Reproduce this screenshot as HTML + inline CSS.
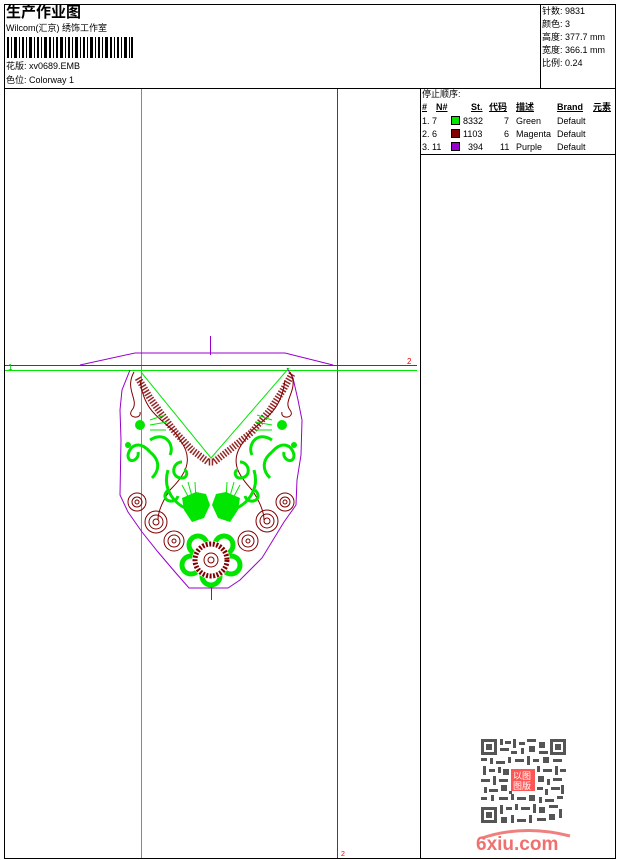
<!DOCTYPE html>
<html><head><meta charset="utf-8"><style>
*{margin:0;padding:0;box-sizing:border-box}
body{width:620px;height:860px;background:#fff;position:relative;overflow:hidden;font-family:"Liberation Sans","Noto Sans CJK SC",sans-serif;color:#000}
.t{position:absolute;font-size:9px;white-space:nowrap;line-height:11px}
.ln{position:absolute;background:#000}
</style></head><body>
<div class="ln" style="left:4px;top:4px;width:612px;height:1px"></div>
<div class="ln" style="left:4px;top:4px;width:1px;height:855px"></div>
<div class="ln" style="left:615px;top:4px;width:1px;height:855px"></div>
<div class="ln" style="left:4px;top:858px;width:612px;height:1px"></div>
<div class="ln" style="left:4px;top:88px;width:612px;height:1px"></div>
<div class="ln" style="left:540px;top:4px;width:1px;height:84px"></div>
<div class="ln" style="left:420px;top:88px;width:1px;height:771px"></div>
<div class="ln" style="left:420px;top:154px;width:196px;height:1px"></div>

<div class="t" style="left:6px;top:4px;font-size:15px;line-height:17px;font-weight:bold">生产作业图</div>
<div class="t" style="left:6px;top:23px">Wilcom(汇京) 绣饰工作室</div>
<svg style="position:absolute;left:7px;top:37px" width="126" height="21">
<g fill="#000">
<rect x="0" y="0" width="2" height="21"/><rect x="4" y="0" width="1" height="21"/><rect x="7" y="0" width="3" height="21"/><rect x="12" y="0" width="1" height="21"/><rect x="15" y="0" width="2" height="21"/><rect x="19" y="0" width="1" height="21"/><rect x="22" y="0" width="3" height="21"/><rect x="27" y="0" width="1" height="21"/><rect x="30" y="0" width="2" height="21"/><rect x="34" y="0" width="1" height="21"/><rect x="37" y="0" width="3" height="21"/><rect x="42" y="0" width="2" height="21"/><rect x="46" y="0" width="1" height="21"/><rect x="49" y="0" width="2" height="21"/><rect x="53" y="0" width="3" height="21"/><rect x="58" y="0" width="1" height="21"/><rect x="61" y="0" width="2" height="21"/><rect x="65" y="0" width="1" height="21"/><rect x="68" y="0" width="3" height="21"/><rect x="73" y="0" width="1" height="21"/><rect x="76" y="0" width="2" height="21"/><rect x="80" y="0" width="1" height="21"/><rect x="83" y="0" width="3" height="21"/><rect x="88" y="0" width="1" height="21"/><rect x="91" y="0" width="2" height="21"/><rect x="95" y="0" width="1" height="21"/><rect x="98" y="0" width="3" height="21"/><rect x="103" y="0" width="2" height="21"/><rect x="107" y="0" width="1" height="21"/><rect x="110" y="0" width="2" height="21"/><rect x="114" y="0" width="1" height="21"/><rect x="117" y="0" width="3" height="21"/><rect x="122" y="0" width="1" height="21"/><rect x="124" y="0" width="2" height="21"/>
</g></svg>
<div class="t" style="left:6px;top:61px">花版: xv0689.EMB</div>
<div class="t" style="left:6px;top:75px">色位: Colorway 1</div>

<div class="t" style="left:542px;top:6px">针数: 9831</div>
<div class="t" style="left:542px;top:19px">颜色: 3</div>
<div class="t" style="left:542px;top:32px">高度: 377.7 mm</div>
<div class="t" style="left:542px;top:45px">宽度: 366.1 mm</div>
<div class="t" style="left:542px;top:58px">比例: 0.24</div>

<div class="t" style="left:422px;top:89px">停止顺序:</div>
<div class="t" style="left:422px;top:102px;font-weight:bold;text-decoration:underline">#</div>
<div class="t" style="left:436px;top:102px;font-weight:bold;text-decoration:underline">N#</div>
<div class="t" style="left:471px;top:102px;font-weight:bold;text-decoration:underline">St.</div>
<div class="t" style="left:489px;top:102px;font-weight:bold;text-decoration:underline">代码</div>
<div class="t" style="left:516px;top:102px;font-weight:bold;text-decoration:underline">描述</div>
<div class="t" style="left:557px;top:102px;font-weight:bold;text-decoration:underline">Brand</div>
<div class="t" style="left:593px;top:102px;font-weight:bold;text-decoration:underline">元素</div>
<div class="t" style="left:422px;top:116px">1. 7</div><div style="position:absolute;left:451px;top:116px;width:9px;height:9px;background:#00e600;border:1px solid #000"></div><div class="t" style="left:463px;top:116px">8332</div><div class="t" style="left:504px;top:116px">7</div><div class="t" style="left:516px;top:116px">Green</div><div class="t" style="left:557px;top:116px">Default</div>
<div class="t" style="left:422px;top:129px">2. 6</div><div style="position:absolute;left:451px;top:129px;width:9px;height:9px;background:#800000;border:1px solid #000"></div><div class="t" style="left:463px;top:129px">1103</div><div class="t" style="left:504px;top:129px">6</div><div class="t" style="left:516px;top:129px">Magenta</div><div class="t" style="left:557px;top:129px">Default</div>
<div class="t" style="left:422px;top:142px">3. 11</div><div style="position:absolute;left:451px;top:142px;width:9px;height:9px;background:#9900cc;border:1px solid #000"></div><div class="t" style="left:468px;top:142px">394</div><div class="t" style="left:500px;top:142px">11</div><div class="t" style="left:516px;top:142px">Purple</div><div class="t" style="left:557px;top:142px">Default</div>

<svg style="position:absolute;left:0;top:0" width="620" height="860">
<line x1="141.5" y1="89" x2="141.5" y2="858" stroke="#00e600"/>
<line x1="337.5" y1="89" x2="337.5" y2="858" stroke="#e60000"/>
<line x1="5" y1="365.5" x2="417" y2="365.5" stroke="#e60000"/>
<line x1="5" y1="370.5" x2="417" y2="370.5" stroke="#00e600"/>
<text x="8" y="370" font-size="8" fill="#00c000" font-family="Liberation Sans">1</text>
<text x="407" y="364" font-size="8" fill="#e60000" font-family="Liberation Sans">2</text>
<text x="341" y="856" font-size="7" fill="#e60000" font-family="Liberation Sans">2</text>
<g fill="none" stroke="#9900cc" stroke-width="1">
<polyline points="80,365 135,353 285,353 333,365"/>
<line x1="210.5" y1="336" x2="210.5" y2="355"/>
<line x1="211.5" y1="588" x2="211.5" y2="600"/>
<polyline points="130,370 122,390 120,410 121,440 120,495 128,512 142,532 158,552 175,572 189,588 228,588 240,580 262,558 284,522 296,505 297,480 301,455 302,420 298,400 293,378 287,368"/>
</g>
<g fill="none" stroke="#00e600" stroke-width="1"><polyline points="141,372 211,458 289,368"/></g>
<g fill="none" stroke="#800000" stroke-width="1">
<polyline points="138,378 150,398 160,412 175,432 192,450 208,462 214,462 232,448 252,432 270,410 283,390 292,374" stroke-dasharray="1.5 1.5" stroke-width="7" opacity="0.85"/>
<path d="M134,372 C124,390 140,400 132,410 C126,418 142,420 140,412 M290,372 C300,390 282,400 290,410 C296,418 280,420 282,412"/>
<path d="M140,380 C145,420 170,420 180,440 C195,460 185,475 170,490 C160,505 158,515 158,520 M285,380 C280,420 255,420 245,440 C228,460 238,475 252,490 C262,505 264,515 264,520"/>
<circle cx="137" cy="502" r="9"/><circle cx="137" cy="502" r="5"/><circle cx="137" cy="502" r="2"/>
<circle cx="156" cy="522" r="11"/><circle cx="156" cy="522" r="7"/><circle cx="156" cy="522" r="3"/>
<circle cx="174" cy="541" r="10"/><circle cx="174" cy="541" r="6"/><circle cx="174" cy="541" r="2"/>
<circle cx="285" cy="502" r="9"/><circle cx="285" cy="502" r="5"/><circle cx="285" cy="502" r="2"/>
<circle cx="267" cy="521" r="11"/><circle cx="267" cy="521" r="7"/><circle cx="267" cy="521" r="3"/>
<circle cx="248" cy="541" r="10"/><circle cx="248" cy="541" r="6"/><circle cx="248" cy="541" r="2"/>
</g>
<g fill="none" stroke="#00e600" stroke-width="5">
<circle cx="198" cy="545" r="9"/><circle cx="224" cy="545" r="9"/><circle cx="191" cy="565" r="9"/><circle cx="231" cy="565" r="9"/><circle cx="211" cy="576" r="9"/>
</g>
<circle cx="211" cy="560" r="19" fill="#fff"/>
<g fill="none" stroke="#800000" stroke-width="1">
<circle cx="211" cy="560" r="16" stroke-dasharray="2 1.5" stroke-width="5"/><circle cx="211" cy="560" r="7"/><circle cx="211" cy="560" r="3"/>
</g>
<g fill="none" stroke="#00e600" stroke-width="3">
<path d="M150,452 C140,440 130,445 128,455 C128,465 140,460 138,452 M150,452 C160,460 160,470 152,478 M150,440 C165,430 175,445 170,455"/>
<path d="M272,452 C282,440 292,445 294,455 C294,465 282,460 284,452 M272,452 C262,460 262,470 270,478 M272,440 C257,430 247,445 252,455"/>
<path d="M182,462 C172,462 170,478 182,478 C188,478 188,470 184,470 M168,490 C158,500 175,506 178,496"/>
<path d="M240,462 C250,462 252,478 240,478 C234,478 234,470 238,470 M255,490 C265,500 248,506 245,496"/>
<path d="M168,470 C162,490 175,505 190,510 M254,470 C260,490 247,505 232,510"/>
</g>
<g stroke="#00e600" stroke-width="1" fill="none">
<path d="M150,420 L165,415 M150,425 L167,422 M150,430 L166,430 M272,420 L257,415 M272,425 L255,422 M272,430 L256,430"/>
<path d="M190,500 L182,485 M193,500 L188,482 M196,500 L195,482 M232,500 L240,485 M229,500 L234,482 M226,500 L227,482"/>
</g>
<g fill="#00e600">
<path d="M182,498 L196,492 L206,494 L210,505 L204,518 L192,522 L184,510Z"/>
<path d="M240,498 L226,492 L216,494 L212,505 L218,518 L230,522 L238,510Z"/>
<circle cx="140" cy="425" r="5"/><circle cx="282" cy="425" r="5"/>
<circle cx="128" cy="445" r="3"/><circle cx="294" cy="445" r="3"/>
</g>
</svg>

<svg style="position:absolute;left:481px;top:739px" width="85" height="84" shape-rendering="crispEdges">
<g fill="#555">
<rect x="0" y="0" width="16" height="16"/><rect x="69" y="0" width="16" height="16"/><rect x="0" y="68" width="16" height="16"/>
</g>
<g fill="#fff"><rect x="3" y="3" width="10" height="10"/><rect x="72" y="3" width="10" height="10"/><rect x="3" y="71" width="10" height="10"/></g>
<g fill="#555"><rect x="5" y="5" width="6" height="6"/><rect x="74" y="5" width="6" height="6"/><rect x="5" y="73" width="6" height="6"/>
<rect x="19" y="0" width="3" height="6"/><rect x="24" y="2" width="6" height="3"/><rect x="32" y="0" width="3" height="9"/><rect x="38" y="3" width="6" height="3"/><rect x="46" y="0" width="9" height="3"/><rect x="58" y="3" width="6" height="6"/>
<rect x="19" y="9" width="9" height="3"/><rect x="30" y="12" width="6" height="3"/><rect x="40" y="9" width="3" height="6"/><rect x="48" y="7" width="6" height="6"/><rect x="58" y="12" width="9" height="3"/>
<rect x="0" y="19" width="6" height="3"/><rect x="9" y="19" width="3" height="6"/><rect x="15" y="22" width="9" height="3"/><rect x="27" y="18" width="3" height="6"/><rect x="34" y="20" width="9" height="3"/><rect x="46" y="17" width="3" height="9"/><rect x="52" y="20" width="6" height="3"/><rect x="62" y="18" width="6" height="6"/><rect x="72" y="20" width="9" height="3"/>
<rect x="2" y="27" width="3" height="9"/><rect x="8" y="30" width="6" height="3"/><rect x="17" y="28" width="3" height="6"/><rect x="22" y="30" width="6" height="6"/><rect x="56" y="27" width="3" height="6"/><rect x="62" y="30" width="9" height="3"/><rect x="74" y="27" width="3" height="9"/><rect x="79" y="30" width="6" height="3"/>
<rect x="0" y="40" width="9" height="3"/><rect x="12" y="37" width="3" height="9"/><rect x="18" y="40" width="9" height="3"/><rect x="57" y="37" width="6" height="6"/><rect x="66" y="40" width="3" height="6"/><rect x="72" y="39" width="9" height="3"/>
<rect x="3" y="48" width="3" height="6"/><rect x="8" y="50" width="9" height="3"/><rect x="20" y="46" width="6" height="6"/><rect x="28" y="52" width="3" height="3"/><rect x="56" y="48" width="6" height="3"/><rect x="64" y="50" width="3" height="6"/><rect x="70" y="48" width="9" height="3"/><rect x="80" y="46" width="3" height="9"/>
<rect x="0" y="58" width="6" height="3"/><rect x="10" y="56" width="3" height="6"/><rect x="18" y="58" width="9" height="3"/><rect x="30" y="55" width="3" height="6"/><rect x="36" y="58" width="9" height="3"/><rect x="48" y="56" width="6" height="6"/><rect x="58" y="58" width="3" height="6"/><rect x="64" y="60" width="9" height="3"/><rect x="76" y="57" width="6" height="3"/>
<rect x="19" y="66" width="3" height="9"/><rect x="25" y="68" width="6" height="3"/><rect x="34" y="65" width="3" height="6"/><rect x="40" y="68" width="9" height="3"/><rect x="52" y="65" width="3" height="9"/><rect x="58" y="68" width="6" height="6"/><rect x="68" y="66" width="9" height="3"/><rect x="78" y="70" width="3" height="9"/>
<rect x="20" y="78" width="6" height="6"/><rect x="30" y="76" width="3" height="8"/><rect x="36" y="80" width="9" height="3"/><rect x="48" y="76" width="3" height="8"/><rect x="56" y="79" width="9" height="3"/><rect x="68" y="75" width="6" height="6"/>
</g>
<rect x="30" y="30" width="24" height="22" fill="#f55"/>
<text x="32" y="40" font-size="9" fill="#fff" font-family="Noto Sans CJK SC">以图</text>
<text x="32" y="50" font-size="9" fill="#fff" font-family="Noto Sans CJK SC">图版</text>
</svg>
<svg style="position:absolute;left:474px;top:826px" width="102" height="28">
<path d="M8,12 Q50,-2 96,10" stroke="#f08080" stroke-width="3" fill="none"/>
<text x="2" y="24" font-size="19" font-weight="bold" fill="#f07070" font-family="Liberation Sans">6xiu.com</text>
</svg>
</body></html>
